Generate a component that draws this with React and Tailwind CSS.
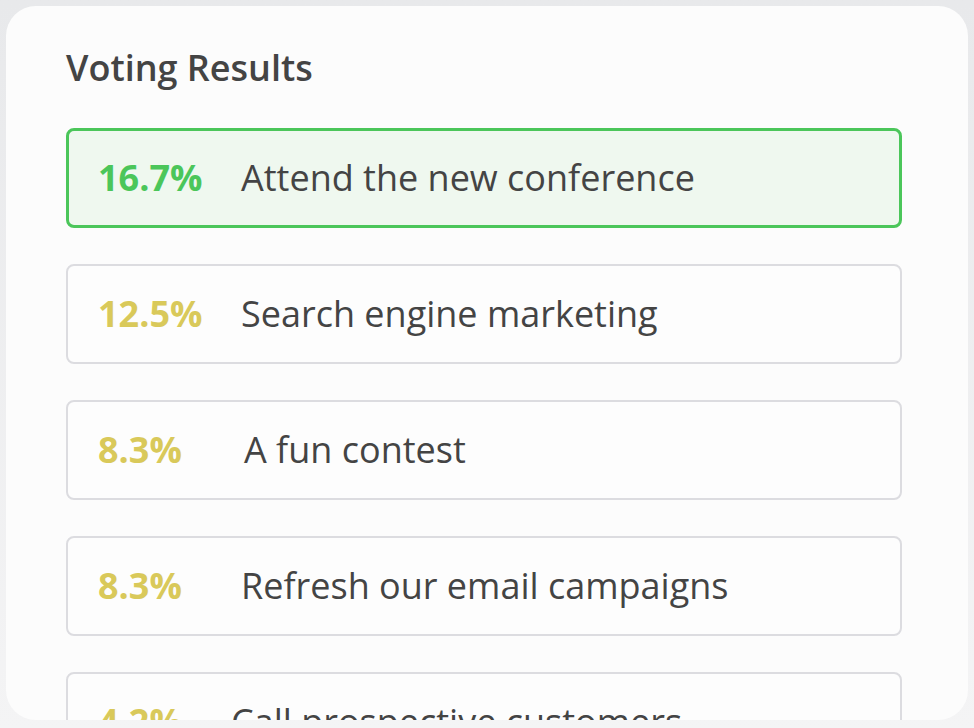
const results = [
  { pct: '16.7%', label: 'Attend the new conference', top: true, shift: 'ml-0' },
  { pct: '12.5%', label: 'Search engine marketing', shift: 'ml-0' },
  { pct: '8.3%', label: 'A fun contest', shift: 'ml-[3px]' },
  { pct: '8.3%', label: 'Refresh our email campaigns', shift: 'ml-0' },
  { pct: '4.2%', label: 'Call prospective customers', shift: 'ml-[-10px]' },
];

export default function App() {
  return (
    <div className="h-[728px] w-[974px] overflow-hidden bg-linear-to-b from-[#e8e9eb] to-[#f4f4f5] p-[6px] pb-[8px] font-['Open_Sans',sans-serif]">
      <div className="h-full overflow-hidden rounded-[30px] bg-[#fcfcfc] pl-[60px] pr-[66px] pt-[39px]">
        <h2 className="text-[36px] leading-[46px] font-semibold text-[#444444]">Voting Results</h2>
        <div className="mt-[37px] flex flex-col gap-[36px]">
          {results.map((r, i) => (
            <div
              key={i}
              className={
                r.top
                  ? 'flex h-[100px] shrink-0 items-center rounded-[8px] border-[3px] border-[#4bc65a] bg-[#eff8ef] pl-[29px]'
                  : 'flex h-[100px] shrink-0 items-center rounded-[8px] border-2 border-[#dcdce0] bg-[#fdfdfd] pl-[30px]'
              }
            >
              <span
                className={`w-[143px] shrink-0 text-[36px] font-bold ${r.top ? 'text-[#4bc65a]' : 'text-[#d9c95a]'}`}
              >
                {r.pct}
              </span>
              <span className={`${r.shift} whitespace-nowrap text-[36px] text-[#444444]`}>{r.label}</span>
            </div>
          ))}
        </div>
      </div>
    </div>
  );
}
